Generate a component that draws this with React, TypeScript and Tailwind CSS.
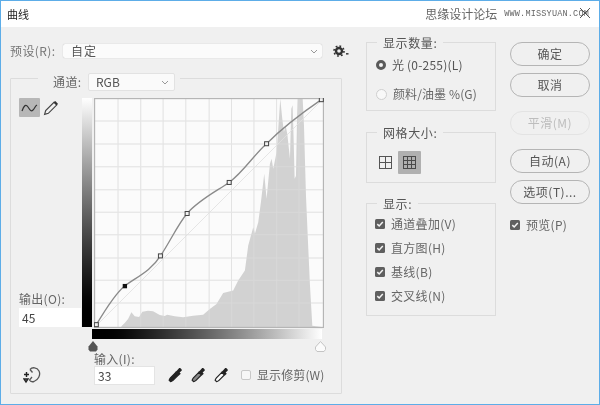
import React from "react";

const FONT = "font-['Noto_Sans_CJK_SC','Liberation_Sans',sans-serif]";

const hist =
  "125,716 125,712 135,702 145,690 155,670 165,682 178,684 188,668 205,665 220,667 240,678 255,681 262,677 285,682 310,685 340,680 370,677 390,660 410,645 430,612 460,605 475,575 495,545 505,470 520,415 525,435 535,400 543,340 553,255 560,330 570,225 575,210 580,240 590,190 595,120 601,30 607,90 612,130 617,110 622,135 630,210 634,60 638,50 641,150 644,270 648,262 651,100 653,28 668,28 672,110 678,320 685,480 690,590 697,710 725,714 732,716";

const gridPos = [115, 183, 250, 318, 388, 455, 522, 590, 657];
const gridY = [97, 166, 234, 303, 370, 438, 507, 574, 642];
const curve =
  "M50,707 C75,665 105,615 135,591 C170,565 215,545 242,501 C270,460 295,405 322,374 C355,335 405,310 448,281 C490,250 525,195 560,165 C610,115 670,70 724,33";
const pts: [number, number][] = [[50, 707], [242, 501], [322, 374], [448, 281], [560, 165], [724, 33]];

function Lines({ stroke, opacity }: { stroke: string; opacity: number }) {
  return (
    <g opacity={opacity}>
      {gridPos.map((x) => (
        <line key={x} x1={x} x2={x} y1="28" y2="717" stroke={stroke} strokeWidth="3" />
      ))}
      {gridY.map((y) => (
        <line key={y} y1={y} y2={y} x1="43" x2="732" stroke={stroke} strokeWidth="3" />
      ))}
    </g>
  );
}

function Graph() {
  return (
    <svg width={230} height={230} viewBox="43 28 689 689" className="block shrink-0">
      <rect x="43" y="28" width="689" height="689" fill="#fbfbfb" />
      <Lines stroke="#e4e4e4" opacity={1} />
      <polygon points={hist} fill="#d2d2d2" />
      <Lines stroke="#e4e4e4" opacity={0.35} />
      <line x1="48" y1="712" x2="726" y2="34" stroke="#e0e0e0" strokeWidth="2.5" />
      <rect x="44.5" y="29.5" width="686" height="686" fill="none" stroke="#b5b5b5" strokeWidth="4" />
      <path d={curve} fill="none" stroke="#8a8a8a" strokeWidth="4" />
      {pts.map(([x, y]) => (
        <rect key={x} x={x - 6} y={y - 6} width="12" height="12" fill="#f0f0f0" stroke="#444" strokeWidth="3" />
      ))}
      <rect x="129" y="585" width="13" height="13" fill="#111" />
    </svg>
  );
}

function Legend({ children, className }: { children: React.ReactNode; className: string }) {
  return <span className={`absolute -top-[7px] bg-[#f0f0f0] px-[6px] text-[12px] leading-[14px] tracking-[0.6px] text-[#555] ${className}`}>{children}</span>;
}

function Check({ label, className = "" }: { label: string; className?: string }) {
  return (
    <div className={`flex items-center gap-[6px] ${className}`}>
      <svg width="10" height="10" viewBox="0 0 10 10" className="shrink-0">
        <rect width="10" height="10" rx="1.5" fill="#5f5f5f" />
        <path d="M2.3 5.1 4.2 7 7.8 3" fill="none" stroke="#f4f4f4" strokeWidth="1.5" />
      </svg>
      <span className="text-[12px] leading-[14px] tracking-[0.3px] text-[#666]">{label}</span>
    </div>
  );
}

function Btn({ label, className = "", disabled = false }: { label: string; className?: string; disabled?: boolean }) {
  return (
    <div
      className={`flex h-[24px] w-[80px] items-center justify-center rounded-[12px] border text-[12px] leading-[14px] tracking-[0.5px] ${
        disabled ? "border-[#e3e3e3] text-[#bdbdbd]" : "border-[#b5b5b5] text-[#555]"
      } ${className}`}
    >
      {label}
    </div>
  );
}

function Dropper({ fill }: { fill: string }) {
  return (
    <svg width="16" height="16" viewBox="0 0 16 16" className="shrink-0">
      <path d="M9 3.6 11 1.2c1-1 3.6 1.4 2.6 2.6L11.6 5.6 12.8 6.8 10.8 8.4 7.4 5Z" fill="#222" />
      <path d="M7.8 5.4 2.4 10.8c-.7.7-1 1.5-1.2 2.4l1.4 1.4c.9-.2 1.7-.5 2.4-1.2L10.4 8Z" fill={fill} stroke="#222" strokeWidth="1.2" />
    </svg>
  );
}

function Caret() {
  return (
    <svg width="8" height="5" viewBox="0 0 8 5" className="shrink-0">
      <path d="M1 1 4 4 7 1" fill="none" stroke="#999" strokeWidth="1" />
    </svg>
  );
}

function GridIcon({ dark = false }: { dark?: boolean }) {
  const c = dark ? "#4a4a4a" : "#555";
  return (
    <svg width="13" height="13" viewBox="0 0 13 13">
      <rect x="0.5" y="0.5" width="12" height="12" fill="none" stroke={c} />
      <path d={dark ? "M4.5 0V13M8.5 0V13M0 4.5H13M0 8.5H13" : "M6.5 0V13M0 6.5H13"} stroke={c} />
    </svg>
  );
}

export default function App() {
  return (
    <div className={`relative flex h-[405px] w-[600px] flex-col overflow-hidden border border-[#5dade8] bg-[#f0f0f0] blur-[0.3px] ${FONT}`}>
      <header className="flex h-[26px] shrink-0 items-center bg-white pl-[6px] pr-[10px]">
        <span className="text-[11px] leading-[14px] text-[#222]">曲线</span>
        <span className="ml-auto text-[12px] leading-[14px] text-[#666]">思缘设计论坛</span>
        <span className="ml-[7px] font-['Liberation_Mono',monospace] text-[8.5px] tracking-[0.2px] text-[#666]">WWW.MISSYUAN.COM</span>
      </header>
      <svg width="12" height="12" viewBox="0 0 12 12" className="absolute right-[8px] top-[6px]">
        <path d="M1 1 11 11M11 1 1 11" stroke="#555" strokeWidth="1" />
      </svg>

      <main className="flex flex-1">
        <section className="ml-[9px] flex w-[332px] shrink-0 flex-col">
          <div className="mt-[16px] flex h-[16px] items-center">
            <span className="w-[53px] shrink-0 text-[12px] leading-[14px] tracking-[0.4px] text-[#777]">预设(R):</span>
            <div className="flex h-[14px] w-[259px] shrink-0 items-center justify-between rounded-[2px] bg-[#fbfbfb] pl-[8px] pr-[4px] shadow-[0_0_1px_#aaa]">
              <span className="text-[12px] leading-[14px] tracking-[1px] text-[#555]">自定</span>
              <Caret />
            </div>
            <svg width="18" height="12" viewBox="0 0 18 12" className="ml-[11px] shrink-0">
              <circle cx="6" cy="6" r="3" fill="none" stroke="#333" strokeWidth="2.4" />
              <circle cx="6" cy="6" r="5" fill="none" stroke="#333" strokeWidth="1.6" strokeDasharray="1.8 2.1" />
              <rect x="13" y="8" width="2.5" height="1.6" fill="#444" />
            </svg>
          </div>

          <div className="relative mt-[19px] h-[316px] rounded-[1px] border border-[#dcdcdc] pl-[8px] pt-[19px]">
            <div className="absolute -top-[6px] left-[27px] flex items-center bg-[#f0f0f0] pl-[15px] pr-[5px]">
              <span className="w-[35px] text-[12px] leading-[14px] tracking-[0.4px] text-[#666]">通道:</span>
              <div className="flex h-[18px] w-[87px] items-center justify-between rounded-[2px] border border-[#e2e2e2] bg-[#fafafa] pl-[7px] pr-[5px]">
                <span className="text-[12px] leading-[14px] text-[#555]">RGB</span>
                <Caret />
              </div>
            </div>

            <div className="flex h-[230px]">
              <div className="flex w-[63px] flex-col justify-between">
                <div className="flex items-center gap-[3px]">
                  <div className="flex h-[19px] w-[21px] items-center justify-center rounded-[1px] bg-[#b7b7b7]">
                    <svg width="17" height="10" viewBox="0 0 17 10">
                      <path d="M1 8C3 2 5 1 7 4S10 9 12 7 14 3 16 2" fill="none" stroke="#333" strokeWidth="1.2" />
                    </svg>
                  </div>
                  <svg width="16" height="16" viewBox="0 0 15 15">
                    <path d="M1.5 13.5 2.5 10 10.5 2 13 4.5 5 12.5Z" fill="none" stroke="#444" strokeWidth="1.1" />
                    <path d="M10 2.5 11.5 1 14 3.5 12.5 5Z" fill="#333" />
                  </svg>
                </div>
                <div className="mb-[1px] flex flex-col">
                  <span className="text-[12px] leading-[14px] tracking-[0.3px] text-[#666]">输出(O):</span>
                  <div className="mt-[2px] flex h-[19px] w-[62px] items-center bg-white pl-[3px] text-[12px] leading-[14px] text-[#444]">45</div>
                </div>
              </div>
              <div className="h-[229px] w-[10px] bg-gradient-to-b from-white to-black" />
              <div className="ml-[2px]"><Graph /></div>
            </div>

            <div className="ml-[73px] mt-[1px] h-[10px] w-[230px] bg-gradient-to-r from-black to-white" />

            <div className="ml-[69px] mt-[2px] flex h-[11px] w-[238px] justify-between">
              <svg width="10" height="11" viewBox="0 0 10 11">
                <path d="M5 0 9.5 5.5V8.5L8 10.5H2L.5 8.5V5.5Z" fill="#555" />
              </svg>
              <svg width="11" height="11" viewBox="0 0 11 11">
                <path d="M5.5.5 10.5 6V8.5L9 10.5H2L.5 8.5V6Z" fill="#fbfbfb" stroke="#c4c4c4" />
              </svg>
            </div>

            <div className="flex items-end">
              <div className="mb-[1px] w-[75px] pl-[4px]">
                <svg width="18" height="18" viewBox="0 0 18 18">
                  <path d="M7 3.5C9 1 14 1 16 5S15 14 11 15.5C9 16 7 15 6.5 14L9 11" fill="none" stroke="#555" strokeWidth="1.3" />
                  <path d="M7 3.5 9.5 6.5" fill="none" stroke="#555" strokeWidth="1.3" />
                  <path d="M1 8.5H6M3.5 6V11M1 13 5 13 3 16Z" fill="none" stroke="#222" strokeWidth="1.4" />
                </svg>
              </div>
              <div className="flex flex-col">
                <span className="text-[12px] leading-[14px] tracking-[0.3px] text-[#666]">输入(I):</span>
                <div className="flex h-[19px] w-[61px] items-center border border-[#e4e4e4] bg-white pl-[3px] text-[12px] leading-[14px] text-[#444]">33</div>
              </div>
              <div className="mb-[2px] ml-[13px] flex items-center gap-[7px]">
                <Dropper fill="#222" />
                <Dropper fill="#888" />
                <Dropper fill="#fbfbfb" />
              </div>
              <div className="mb-[3px] ml-[11px] flex items-center gap-[6px]">
                <span className="h-[10px] w-[10px] rounded-[2px] border border-[#c8c8c8] bg-[#f6f6f6]" />
                <span className="text-[12px] leading-[14px] tracking-[0.1px] text-[#666]">显示修剪(W)</span>
              </div>
            </div>
          </div>
        </section>

        <section className="ml-[24px] flex w-[130px] shrink-0 flex-col">
          <div className="relative mt-[15px] h-[69px] border border-[#dcdcdc] pl-[9px]">
            <Legend className="left-[10px]">显示数量:</Legend>
            <div className="mt-[15px] flex items-center gap-[6px]">
              <span className="h-[10px] w-[10px] rounded-full border-[3px] border-[#5a5a5a] bg-[#f4f4f4]" />
              <span className="text-[12px] leading-[14px] tracking-[0.2px] text-[#555]">光 (0-255)(L)</span>
            </div>
            <div className="mt-[15px] flex items-center gap-[6px]">
              <span className="h-[11px] w-[11px] rounded-full border border-[#cfcfcf] bg-[#f8f8f8]" />
              <span className="text-[12px] leading-[14px] tracking-[0.1px] text-[#666]">颜料/油墨 %(G)</span>
            </div>
          </div>

          <div className="relative mt-[21px] flex h-[51px] items-center gap-[6px] border border-[#dcdcdc] pl-[12px] pt-[10px]">
            <Legend className="left-[10px]">网格大小:</Legend>
            <GridIcon />
            <div className="flex h-[23px] w-[23px] items-center justify-center rounded-[1px] bg-[#b0b0b0]">
              <GridIcon dark />
            </div>
          </div>

          <div className="relative mt-[20px] flex h-[113px] flex-col gap-[10px] border border-[#dcdcdc] pl-[8px] pt-[13px]">
            <Legend className="left-[10px]">显示:</Legend>
            <Check label="通道叠加(V)" />
            <Check label="直方图(H)" />
            <Check label="基线(B)" />
            <Check label="交叉线(N)" />
          </div>
        </section>

        <section className="ml-[14px] flex w-[80px] shrink-0 flex-col">
          <Btn label="确定" className="mt-[15px]" />
          <Btn label="取消" className="mt-[7px]" />
          <Btn label="平滑(M)" className="mt-[14px]" disabled />
          <Btn label="自动(A)" className="mt-[14px]" />
          <Btn label="选项(T)..." className="mt-[7px]" />
          <Check label="预览(P)" className="mt-[14px]" />
        </section>
      </main>
    </div>
  );
}
